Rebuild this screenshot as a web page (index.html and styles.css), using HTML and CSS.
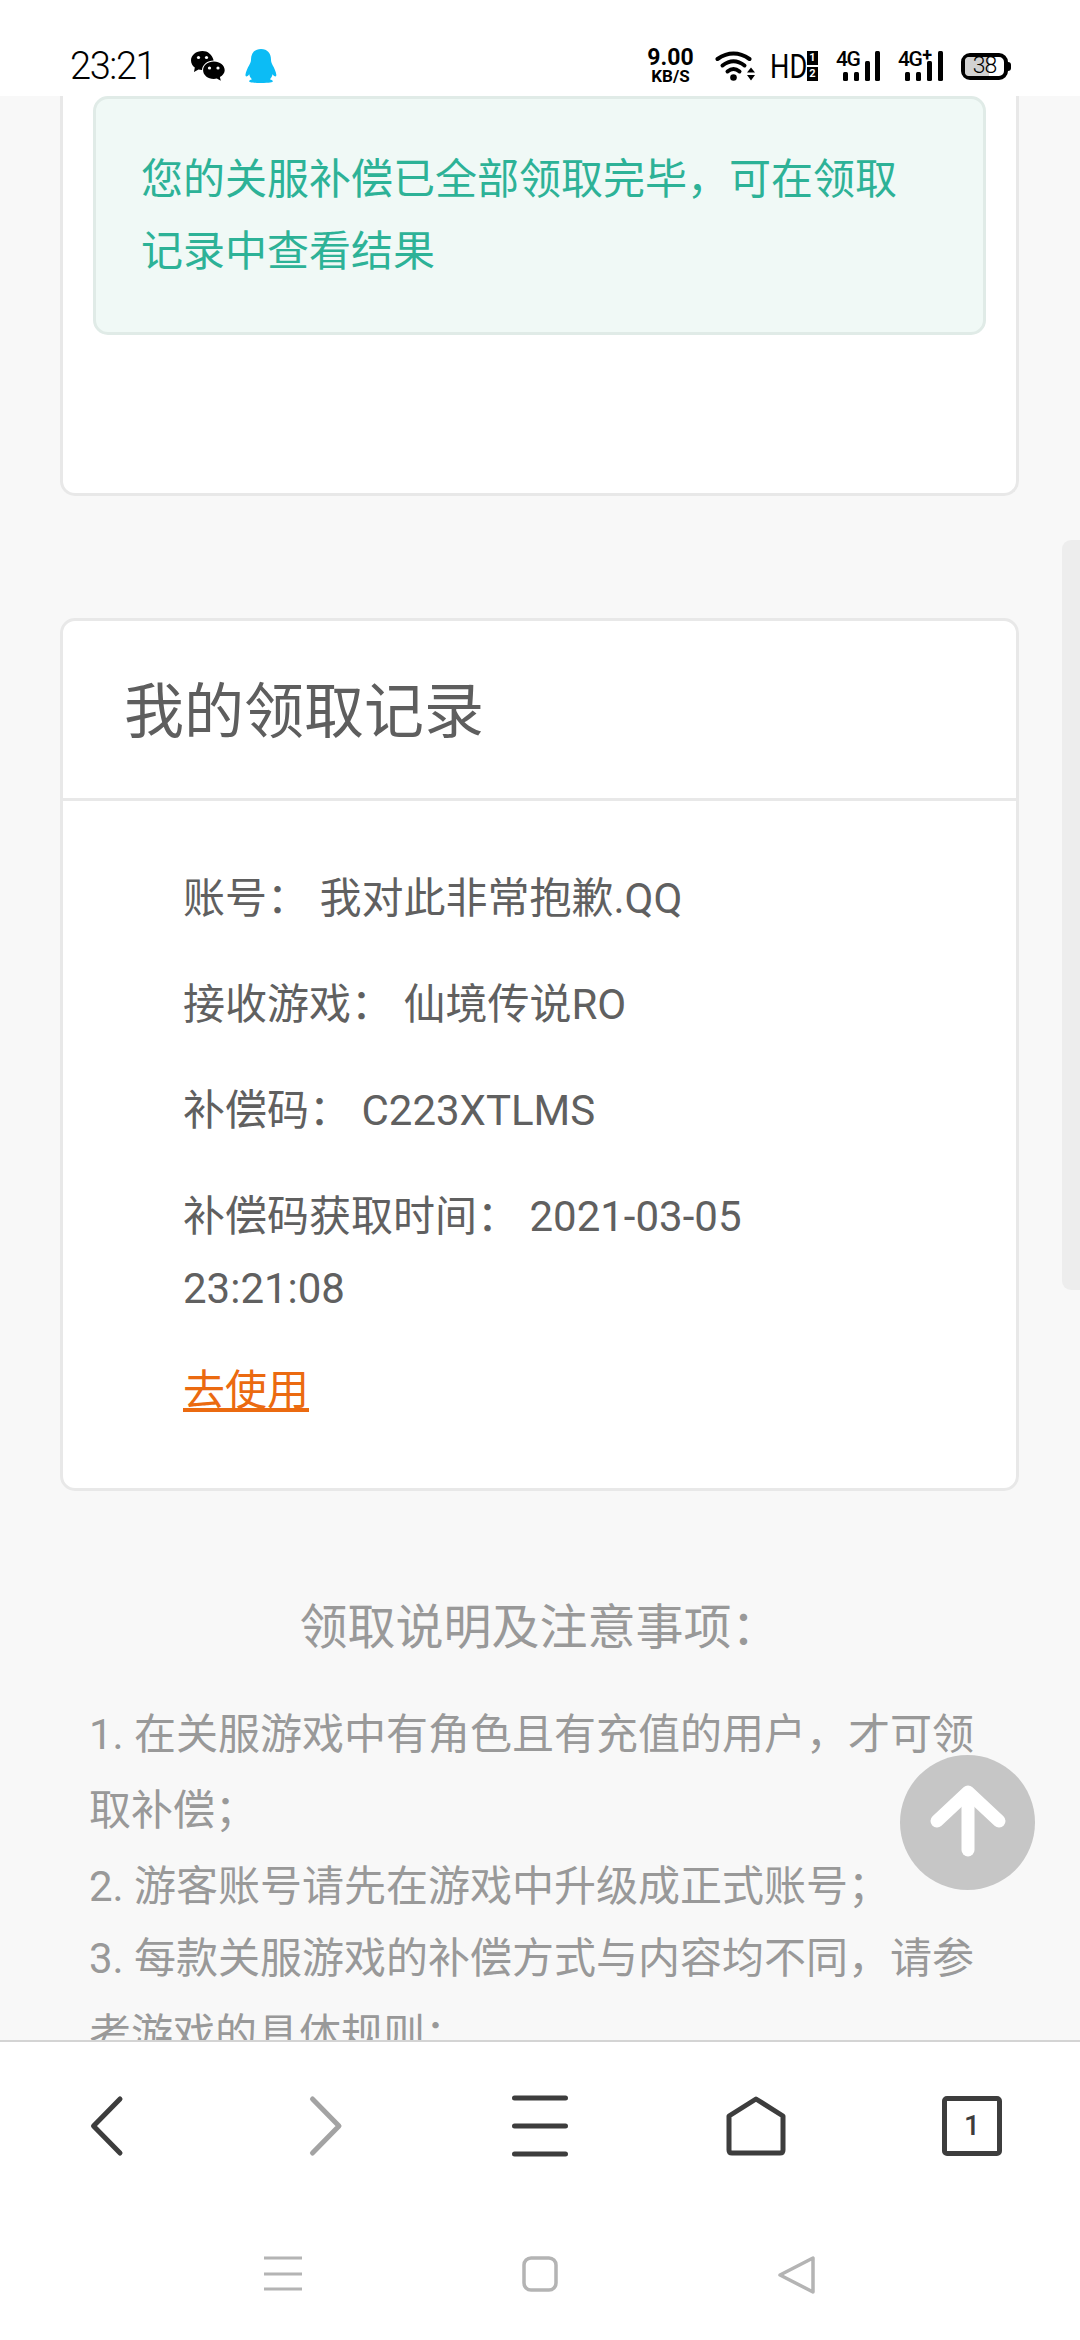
FILE: index.html
```html
<!DOCTYPE html>
<html lang="zh">
<head>
<meta charset="utf-8">
<title>补偿领取</title>
<link rel="stylesheet" href="styles.css">
</head>
<body>
<div class="phone">
  <header class="status">
    <div class="status-left">
      <span class="time">23:21</span>
      <svg class="ic-wechat" width="34" height="30" viewBox="0 0 34 30">
        <path fill="#000" d="M11.500 0C5 0 0 4.200 0 9.500c0 2.900 1.500 5.400 3.800 7.100L3 21l4.500-2.400c1 .3 2.300.5 3.500.5.300-5.500 5.400-9.600 11.500-9.600 0-.4 0-.5 0-.5C21 3.400 16.700 0 11.500 0z"/>
        <path fill="#000" d="M22.800 10.500c-6 0-10.700 3.900-10.700 8.800 0 4.800 4.700 8.700 10.700 8.700 1 0 2-.1 3-.4l4 2.100-.9-3.600c2.900-1.600 4.800-4 4.800-6.800 0-4.900-4.800-8.800-10.900-8.800z"/>
        <circle fill="#fff" cx="7.500" cy="6.500" r="1.600"/><circle fill="#fff" cx="15.500" cy="6.500" r="1.600"/>
        <circle fill="#fff" cx="18.500" cy="17" r="1.600"/><circle fill="#fff" cx="27" cy="17" r="1.600"/>
      </svg>
      <svg class="ic-qq" width="32" height="34" viewBox="0 0 32 34">
        <path fill="#0cbcf5" d="M16 0c6.500 0 10 4.500 10 10.500 0 2 .3 3 1.500 5.500 2 3.500 3.500 7 3.800 9.500.2 2-.5 2.800-2.500 1.300l-1.300-1.500c-.3 2-1.200 3.600-2.700 5 2 .6 3 1.200 3 2 0 1.100-3 1.700-12 1.700s-11.700-.6-11.700-1.700c0-.8 1-1.400 2.900-2-1.500-1.400-2.400-3-2.700-5l-1.300 1.500c-2 1.500-2.700.7-2.500-1.300.3-2.500 1.800-6 3.800-9.500C5.700 13.500 6 12.500 6 10.500 6 4.500 9.500 0 16 0z"/>
      </svg>
    </div>
    <div class="status-right">
      <div class="speed"><span class="speed-num">9.00</span><span class="speed-unit">KB/S</span></div>
      <svg class="ic-wifi" width="40" height="30" viewBox="0 0 40 30">
        <g fill="none" stroke="#000" stroke-width="4" stroke-linecap="round">
          <path d="M2.500 8Q18.500-3 34.500 8"/><path d="M7.500 14.500Q18.500 6 29.500 14.500"/><path d="M12.500 20.500Q18.500 15.500 24.500 20.500"/>
        </g>
        <circle cx="18.500" cy="26.500" r="3.300" fill="#000"/>
        <path d="M32 21.500l4-5 4 5zM32 24h8l-4 5.500z" fill="#000"/>
      </svg>
      <div class="hd"><span class="hd-text">HD</span><span class="hd-sim"><span class="hd-one">1</span><span class="hd-two">2</span></span></div>
      <div class="sig">
        <span class="sig-label">4G</span>
        <svg class="sig-bars" width="38" height="30" viewBox="0 0 38 30"><g fill="#000"><rect x="0" y="21" width="5" height="9" rx="1.500"/><rect x="11" y="21" width="5" height="9" rx="1.500"/><rect x="22" y="10" width="5" height="20" rx="1.500"/><rect x="32" y="0" width="5" height="30" rx="1.500"/></g></svg>
      </div>
      <div class="sig">
        <span class="sig-label">4G<span class="plus">+</span></span>
        <svg class="sig-bars" width="38" height="30" viewBox="0 0 38 30"><g fill="#000"><rect x="0" y="21" width="5" height="9" rx="1.500"/><rect x="11" y="21" width="5" height="9" rx="1.500"/><rect x="22" y="10" width="5" height="20" rx="1.500"/><rect x="33" y="0" width="5" height="30" rx="1.500"/></g></svg>
      </div>
      <div class="battery"><span class="batt-fill"></span><span class="batt-num">38</span></div>
    </div>
  </header>

  <main class="content">
    <section class="card card-top">
      <div class="alert">您的关服补偿已全部领取完毕，可在领取记录中查看结果</div>
    </section>

    <section class="card card-record">
      <h2 class="card-title">我的领取记录</h2>
      <div class="card-body">
        <p class="row">账号<span class="pn">：</span> 我对此非常抱歉.QQ</p>
        <p class="row">接收游戏<span class="pn">：</span> 仙境传说RO</p>
        <p class="row">补偿码<span class="pn">：</span> C223XTLMS</p>
        <p class="row row-narrow">补偿码获取时间<span class="pn">：</span> 2021-03-05 23:21:08</p>
        <p class="row"><a class="use-link" href="#">去使用</a></p>
      </div>
    </section>

    <section class="notes">
      <h3 class="notes-title">领取说明及注意事项<span class="pn">：</span></h3>
      <p class="notes-text">1. 在关服游戏中有角色且有充值的用户，才可领取补偿<span class="pn">；</span><br>2. 游客账号请先在游戏中升级成正式账号<span class="pn">；</span><br>3. 每款关服游戏的补偿方式与内容均不同，请参考游戏的具体规则<span class="pn">；</span></p>
    </section>

    <div class="scrollbar"></div>
    <div class="to-top">
      <svg width="80" height="80" viewBox="0 0 80 80"><g fill="none" stroke="#fff" stroke-width="13" stroke-linecap="round" stroke-linejoin="round"><path d="M40 67V10"/><path d="M9 38L40 9l31 29"/></g></svg>
    </div>
  </main>

  <nav class="toolbar">
    <svg width="40" height="64" viewBox="0 0 40 64"><path d="M32 5L5.500 32 32 59" fill="none" stroke="#3d3d3d" stroke-width="5" stroke-linecap="round" stroke-linejoin="round"/></svg>
    <svg width="40" height="64" viewBox="0 0 40 64"><path d="M8.500 5L35 32 8.500 59" fill="none" stroke="#a3a3a3" stroke-width="5" stroke-linecap="round" stroke-linejoin="round"/></svg>
    <svg width="56" height="64" viewBox="0 0 56 64"><g stroke="#3d3d3d" stroke-width="5" stroke-linecap="round"><path d="M2.500 4h51M2.500 32h51M2.500 60h51"/></g></svg>
    <svg width="60" height="60" viewBox="0 0 60 60"><path d="M30 3L57 20v34q0 3-3 3H6q-3 0-3-3V20z" fill="none" stroke="#3d3d3d" stroke-width="5" stroke-linejoin="round"/></svg>
    <div class="tab-count">1</div>
  </nav>

  <nav class="sysnav">
    <svg width="38" height="36" viewBox="0 0 38 36"><path d="M0 2h38M0 18h38M0 33h38" stroke="#b4b4b4" stroke-width="3"/></svg>
    <svg width="36" height="36" viewBox="0 0 36 36"><rect x="2" y="2" width="32" height="32" rx="7" fill="none" stroke="#b4b4b4" stroke-width="3.500"/></svg>
    <svg width="40" height="38" viewBox="0 0 40 38"><path d="M3 19L36 2v34z" fill="none" stroke="#b4b4b4" stroke-width="3.500" stroke-linejoin="round"/></svg>
  </nav>
</div>
</body>
</html>
```

FILE: styles.css
```css
* { box-sizing: border-box; }
html, body { margin: 0; padding: 0; }
body {
  width: 1080px;
  height: 2340px;
  overflow: hidden;
  background: #fff;
  font-family: Roboto, "Noto Sans CJK SC", sans-serif;
}
.phone { width: 1080px; height: 2340px; display: flex; flex-direction: column; }
.pn { font-family: "Noto Sans CJK JP", sans-serif; }

/* status bar */
.status {
  height: 96px;
  flex: none;
  background: #fff;
  display: flex;
  justify-content: space-between;
  align-items: center;
  padding: 36px 69px 0 70px;
  color: #000;
}
.status-left { display: flex; align-items: center; gap: 20px; }
.time { width: 87px; font-size: 38px; line-height: 42px; letter-spacing: -1.400px; font-weight: 300; margin-right: 14px; white-space: nowrap; }
.status-right { display: flex; align-items: center; }
.speed { width: 47px; margin-right: 21px; display: flex; flex-direction: column; align-items: center; font-weight: 700; }
.speed-num { font-size: 23px; line-height: 20px; }
.speed-unit { font-size: 17px; line-height: 16px; }
.ic-wifi { margin-right: 15px; display: block; }
.hd { width: 48px; height: 30px; margin-right: 18px; display: flex; justify-content: space-between; align-items: center; }
.hd-text { width: 36px; font-size: 34px; line-height: 30px; transform: scaleX(.8); transform-origin: left center; }
.hd-sim { display: flex; flex-direction: column; gap: 2px; width: 11px; height: 30px; font-size: 11px; font-weight: 700; line-height: 14px; text-align: center; }
.hd-one, .hd-two { background: #000; color: #fff; height: 14px; }
.sig { position: relative; width: 45px; height: 30px; margin-right: 17px; display: flex; justify-content: flex-end; }
.sig-label { position: absolute; left: 0; top: -2px; font-size: 21px; line-height: 21px; font-weight: 500; letter-spacing: -1.500px; white-space: nowrap; }
.plus { position: relative; top: -5px; left: 1px; font-size: 18px; font-weight: 700; }
.sig-bars { display: block; }
.battery {
  position: relative;
  width: 47px;
  height: 27px;
  margin-left: 1px;
  margin-right: 3px;
  border: 4px solid #000;
  border-radius: 9px;
  display: flex;
  align-items: center;
  justify-content: center;
}
.battery::after {
  content: "";
  position: absolute;
  right: -7px;
  top: 5px;
  width: 3px;
  height: 9px;
  border-radius: 0 3px 3px 0;
  background: #000;
}
.batt-fill { position: absolute; left: 0; top: 0; bottom: 0; width: 62%; border-radius: 4px 0 0 4px; background: #d2d2d2; }
.batt-num { position: relative; font-size: 23px; line-height: 20px; font-weight: 300; letter-spacing: -1px; }

/* page */
.content {
  position: relative;
  flex: 1;
  min-height: 0;
  overflow: hidden;
  background: #f8f8f8;
  padding: 0 61px 0 60px;
}
.card {
  background: #fff;
  border: 3px solid #e8e8e8;
  border-radius: 15px;
}
.card-top {
  border-top: none;
  border-top-left-radius: 0;
  border-top-right-radius: 0;
  height: 400px;
  padding: 0 30px;
}
.alert {
  height: 239px;
  background: #f0f9f6;
  border: 3px solid #e0ebe7;
  border-radius: 15px;
  padding: 45px 45px 0;
  color: #2db297;
  font-size: 42px;
  line-height: 72px;
}
.card-record { margin-top: 122px; height: 873px; }
.card-title {
  margin: 0;
  height: 180px;
  padding: 0 61px 6px;
  display: flex;
  align-items: center;
  font-size: 60px;
  font-weight: 400;
  color: #5e5e5e;
  border-bottom: 3px solid #e8e8e8;
}
.card-body { padding: 58px 0 0 120px; }
.row {
  margin: 0 0 30px;
  font-size: 42px;
  line-height: 72px;
  color: #606060;
}
.row-narrow { width: 640px; }
.use-link { color: #eb6a10; text-decoration: underline; }
.notes { padding: 0 29px; margin-top: 96px; }
.notes-title {
  margin: 0 0 35px;
  text-align: center;
  font-size: 48px;
  line-height: 72px;
  font-weight: 400;
  color: #999;
}
.notes-text { margin: 0; font-size: 42px; line-height: 72px; color: #999; }

.scrollbar {
  position: absolute;
  right: 0;
  top: 444px;
  width: 18px;
  height: 750px;
  border-radius: 9px 0 0 9px;
  background: #ededed;
}
.to-top {
  position: absolute;
  left: 900px;
  top: 1659px;
  width: 135px;
  height: 135px;
  border-radius: 50%;
  background: #c6c6c6;
  display: flex;
  align-items: center;
  justify-content: center;
}

/* toolbars */
.toolbar {
  flex: none;
  height: 166px;
  background: #fff;
  border-top: 2px solid #d4d4d4;
  display: grid;
  grid-template-columns: repeat(5, 216px);
  justify-items: center;
  align-items: center;
  padding-top: 3px;
}
.tab-count {
  width: 60px;
  height: 60px;
  border: 5px solid #3d3d3d;
  border-radius: 5px;
  display: flex;
  align-items: center;
  justify-content: center;
  font-size: 28px;
  font-weight: 500;
  color: #3d3d3d;
}
.sysnav {
  flex: none;
  height: 134px;
  background: #fff;
  display: flex;
  align-items: flex-start;
  justify-content: space-between;
  padding: 50px 263px 0 264px;
}
.sysnav svg { display: block; }
```
